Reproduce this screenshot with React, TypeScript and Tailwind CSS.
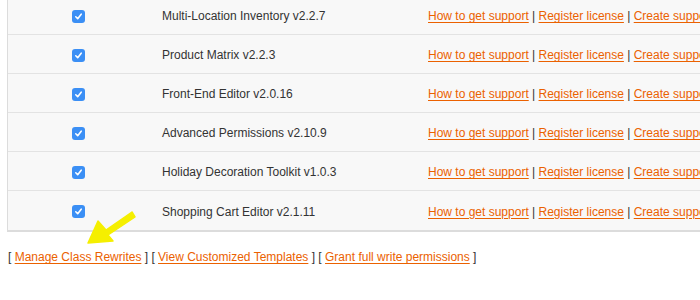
import React from 'react';

const MODULES = [
  'Multi-Location Inventory v2.2.7',
  'Product Matrix v2.2.3',
  'Front-End Editor v2.0.16',
  'Advanced Permissions v2.10.9',
  'Holiday Decoration Toolkit v1.0.3',
  'Shopping Cart Editor v2.1.11',
];

function Check() {
  return (
    <span className="flex h-[13px] w-[13px] items-center justify-center rounded-[3px] bg-[#3b8ff5]">
      <svg width="9" height="9" viewBox="0 0 9 9">
        <path d="M1.8 4.8 L3.7 6.7 L7.2 2.2" fill="none" stroke="#fff" strokeWidth="1.6" strokeLinecap="round" strokeLinejoin="round" />
      </svg>
    </span>
  );
}

function Link({ children }: { children: React.ReactNode }) {
  return <a href="#" className="text-[#eb6100] underline underline-offset-2">{children}</a>;
}

export default function App() {
  return (
    <div className="relative h-[300px] w-[700px] overflow-hidden bg-white text-[12px] text-[#333] font-['Liberation_Sans',Arial,sans-serif]">
      <div className="-mt-[4px] ml-[7px] w-[760px] border-b-2 border-l border-[#dcdcdc] bg-[#f8f8f8]">
        {MODULES.map((name, i) => (
          <div key={name} className={`flex h-[39px] items-center pt-[2px] ${i < MODULES.length - 1 ? 'border-b border-[#e3e3e3]' : ''}`}>
            <div className="flex w-[141px] justify-center">
              <Check />
            </div>
            <div className="w-[279px] pl-[13px]">{name}</div>
            <div className="whitespace-nowrap">
              <Link>How to get support</Link> | <Link>Register license</Link> | <Link>Create support ticket</Link>
            </div>
          </div>
        ))}
      </div>
      <div className="mt-[16px] pl-[8px] text-[#333]">
        [ <Link>Manage Class Rewrites</Link> ] [ <Link>View Customized Templates</Link> ] [ <Link>Grant full write permissions</Link> ]
      </div>
      <svg className="absolute left-0 top-0" width="700" height="300" viewBox="0 0 700 300">
        <path d="M132 212 L106 230 L98 221 L88 243 L113 241 L108 235 L135 217 Z" fill="#f5ef00" stroke="#f5ef00" strokeWidth="1.5" strokeLinejoin="round" />
      </svg>
    </div>
  );
}
